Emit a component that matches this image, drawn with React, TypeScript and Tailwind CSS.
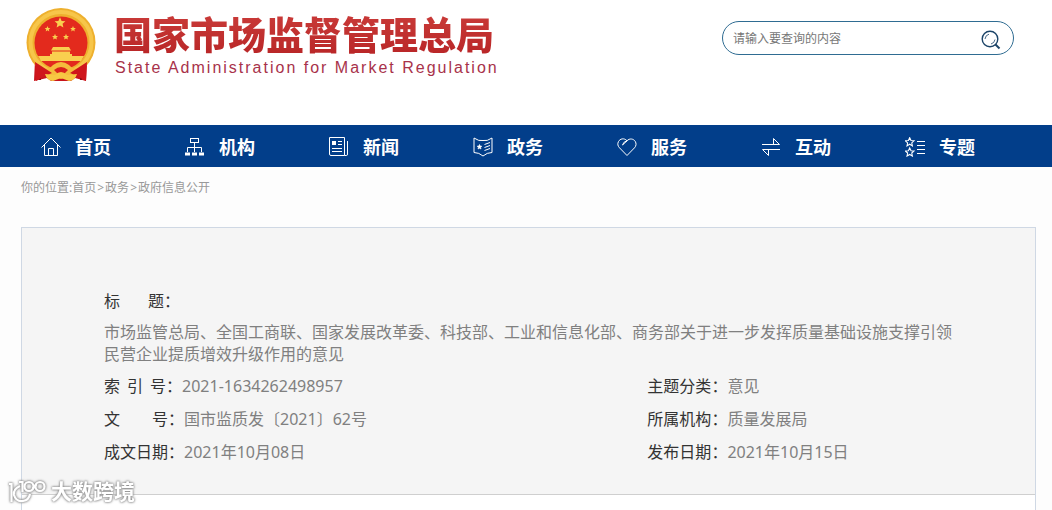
import * as React from 'react';

type IconProps = { children: React.ReactNode };

const NavIcon: React.FC<IconProps> = ({ children }) => {
	return (
		<svg
			viewBox="0 0 20 20"
			className="size-5 shrink-0"
			fill="none"
			stroke="currentColor"
			strokeWidth="1"
			aria-hidden="true"
		>
			{children}
		</svg>
	);
};

const STAR = 'M0 -4.2L1.2 -1.5L4 -1.3L1.9 .6L2.5 3.4L0 1.9L-2.5 3.4L-1.9 .6L-4 -1.3L-1.2 -1.5Z';

const navItems: { label: string; icon: React.ReactNode }[] = [
	{
		label: '首页',
		icon: (
			<>
				<path d="M.5 10.500L10 1L19.500 10.500" />
				<path d="M3.500 8V18.500H16.500V8M7.500 18.500V11.500H12.500V18.500" />
			</>
		),
	},
	{
		label: '机构',
		icon: (
			<>
				<rect x="5.500" y="1.500" width="8" height="4" />
				<path d="M9.500 5.500V15M2.500 15V10.500H16.500V15" />
				<path d="M0 17H5M7 17H12M14 17H19" strokeWidth="3" />
			</>
		),
	},
	{
		label: '新闻',
		icon: (
			<>
				<path d="M.5 .5H15.500V18.500H2Q.5 18.500 .5 17ZM15.500 18.500H17.500Q18.500 18.500 18.500 17V4" />
				<rect x="3.500" y="4.500" width="3" height="3" fill="currentColor" />
				<path d="M9 4.500H13M9 7.500H13M3 11.500H13M3 14.500H13" />
			</>
		),
	},
	{
		label: '政务',
		icon: (
			<>
				<path d="M1 1Q6 4.500 10 3.500Q14 4.500 19 1V15.500Q14 15.500 10 19Q6 15.500 1 15.500Z" />
				<path d={STAR} transform="translate(6.500 10) scale(.6)" fill="currentColor" />
				<path d="M11.500 7.500L17 5.500M11.500 10.500L17 8.500M11.500 13.500L17 11.500" />
			</>
		),
	},
	{
		label: '服务',
		icon: (
			<path d="M5.500 8Q6.500 4.500 10 3.800C7 .5 3 1.800 1.500 4.500C.2 7 .8 9 2.500 10.800L10 18.500L17.500 10.800C19.200 9 19.600 6.500 18.200 4.300C16.500 1.700 12.500 1 10 3.800Z" />
		),
	},
	{
		label: '互动',
		icon: <path d="M1 7.500H18.500L12.500 1.500V7.500M19 12.500H1.500L7.500 18.500V12.500" />,
	},
	{
		label: '专题',
		icon: (
			<>
				<path d={STAR} transform="translate(4.700 5.200) scale(1.080)" />
				<path d={STAR} transform="translate(4.700 15.400) scale(1.080)" />
				<path d="M12 4.500H20M12 8.500H20M12 12.500H20M12 16.500H20" />
			</>
		),
	},
];

const Emblem: React.FC = () => {
	return (
		<svg viewBox="0 0 72 76" className="h-[76px] w-[72px] shrink-0" aria-hidden="true">
			<path d="M10 52L9 73L22 70L26 73H46L50 70L61 73L62 52Z" fill="#c8141c" />
			<path d="M14 60L15 72M57 60L56 72" stroke="#8e0d14" strokeWidth="2" />
			<circle cx="36" cy="34.500" r="34.500" fill="#eeb02e" />
			<circle cx="36" cy="34.500" r="30.500" fill="none" stroke="#f7c64a" strokeWidth="4" />
			<circle cx="36" cy="35" r="26.500" fill="#e32a1d" />
			<g fill="#f9cf4f">
				<path d={STAR} transform="translate(35 15) scale(1.350)" />
				<path d={STAR} transform="translate(22.500 21) scale(.7)" />
				<path d={STAR} transform="translate(48 21) scale(.7)" />
				<path d={STAR} transform="translate(30 29) scale(.75)" />
				<path d={STAR} transform="translate(41 29) scale(.75)" />
				<path d="M28 39H44L46 42.500H26ZM27 43.500H45V46H47V48H25V46H27ZM13 48H59L56 53H16Z" />
			</g>
			<path d="M17 60Q24 62 28 57Q36 51 44 57Q48 62 55 60L47 67L36 71L25 67Z" fill="#f5bc3c" />
			<path d="M10 54L27 65L20 68L11 73ZM62 54L45 65L52 68L61 73Z" fill="#cf161c" />
			<path d="M29 62Q36 56 43 62L39 66H33Z" fill="#d9231c" />
			<path d="M20 66L30 67Q36 61 42 67L52 66Q50 73 44 73L36 70L28 73Q22 73 20 66Z" fill="#f7c843" />
		</svg>
	);
};

type FieldProps = { chars: string[]; gap?: string; value: string };

const Label: React.FC<{ chars: string[]; gap?: string }> = ({ chars, gap }) => {
	return (
		<dt className="flex shrink-0 text-[#333]">
			<span className={`flex ${gap ?? ''}`}>
				{chars.map(char => (
					<span key={char}>{char}</span>
				))}
			</span>
			：
		</dt>
	);
};

const Field: React.FC<FieldProps> = ({ chars, gap, value }) => {
	return (
		<div className="flex">
			<Label chars={chars} gap={gap} />
			<dd>{value}</dd>
		</div>
	);
};

const fields: FieldProps[] = [
	{ chars: ['索', '引', '号'], gap: 'gap-[7px]', value: '2021-1634262498957' },
	{ chars: ['主题分类'], value: '意见' },
	{ chars: ['文', '号'], gap: 'gap-8', value: '国市监质发〔2021〕62号' },
	{ chars: ['所属机构'], value: '质量发展局' },
	{ chars: ['成文日期'], value: '2021年10月08日' },
	{ chars: ['发布日期'], value: '2021年10月15日' },
];

const App: React.FC = () => {
	return (
		<div
			lang="zh-CN"
			className="relative flex h-screen flex-col overflow-hidden bg-[#fdfdfd] font-['Noto_Sans','Noto_Sans_CJK_SC',sans-serif]"
		>
			<header className="flex h-[125px] shrink-0 items-start justify-between bg-white pr-[38px] pl-[25px]">
				<div className="flex items-start gap-[17px] pt-2">
					<Emblem />
					<div className="pt-1.5 whitespace-nowrap">
						<h1 className="bg-linear-to-b from-[#c93a38] to-[#b82426] bg-clip-text font-['Liberation_Sans','Noto_Sans_CJK_SC',sans-serif] text-[38px] leading-[44px] font-black text-transparent">
							国家市场监督管理总局
						</h1>
						<p className="pt-0.5 pl-px font-['Liberation_Sans',sans-serif] text-base leading-4 tracking-[2px] text-[#a8324a]">
							State Administration for Market Regulation
						</p>
					</div>
				</div>
				<form
					role="search"
					onSubmit={e => e.preventDefault()}
					className="mt-[21px] flex h-[34px] w-[292px] items-center rounded-full border border-[#2f6c92] bg-white pr-3 pl-2.5"
				>
					<input
						type="text"
						aria-label="请输入要查询的内容"
						placeholder="请输入要查询的内容"
						className="min-w-0 flex-1 pt-0.5 text-xs outline-none placeholder:text-[#777]"
					/>
					<button type="submit" aria-label="搜索" className="pt-1">
						<svg viewBox="0 0 20 20" className="size-5" fill="none" stroke="#1c4468">
							<circle cx="9" cy="9" r="7.800" strokeWidth="1.400" />
							<path d="M14.500 14.500L18.500 18.500" strokeWidth="2" />
							<path d="M4 9Q4.500 5 8 4.200M10 14Q13.500 13 14 9.500" strokeWidth=".8" />
						</svg>
					</button>
				</form>
			</header>

			<nav className="h-[42px] shrink-0 bg-[#023e8a] px-[22px]">
				<ul className="flex h-full">
					{navItems.map(item => (
						<li key={item.label} className="w-1/7">
							<a href="#" className="flex h-full items-center gap-3.5 pt-0.5 pl-[19px] text-lg font-bold text-white">
								<NavIcon>{item.icon}</NavIcon>
								{item.label}
							</a>
						</li>
					))}
				</ul>
			</nav>

			<div className="flex h-10 shrink-0 items-center px-[21px] pt-0.5 text-xs text-[#999]">
				你的位置:
				<a href="#">首页</a>
				<span className="px-px">&gt;</span>
				<a href="#">政务</a>
				<span className="px-px">&gt;</span>
				<a href="#">政府信息公开</a>
			</div>

			<main className="mx-4 mt-5 ml-[21px] flex-1 border border-b-0 border-[#cfd8e4] bg-white">
				<dl className="border-b border-[#cfcfcf] bg-[#f5f5f5] px-[82px] pt-[62px] pb-[31px] text-base leading-[22px] text-[#808080]">
					<Label chars={['标', '题']} gap="gap-7" />
					<dd className="pt-[9px] pb-2.5">
						市场监管总局、全国工商联、国家发展改革委、科技部、工业和信息化部、商务部关于进一步发挥质量基础设施支撑引领民营企业提质增效升级作用的意见
					</dd>
					<div className="grid grid-cols-[16fr_9fr] gap-y-[11px]">
						{fields.map(field => (
							<Field key={field.value} {...field} />
						))}
					</div>
				</dl>
			</main>

			<div className="absolute bottom-1.5 left-2 flex items-center gap-[3px] text-white [filter:drop-shadow(0_0_1px_#888)_drop-shadow(0_0_1px_#aaa)]">
				<svg viewBox="0 0 40 26" className="h-[26px] w-10" fill="none" stroke="currentColor" strokeWidth="2.200" aria-hidden="true">
					<path d="M1 6H3.500V24M12 8Q5 11 6 17Q8 24 15 23Q21 22 22 16" />
					<path d="M11 4H14.500V14" />
					<circle cx="21" cy="8.500" r="4.500" />
					<circle cx="32" cy="8.500" r="4.500" />
					<path d="M24.500 11L28.500 6" />
				</svg>
				<span className="text-[21px] leading-6 font-bold">大数跨境</span>
			</div>
		</div>
	);
};

export default App;
